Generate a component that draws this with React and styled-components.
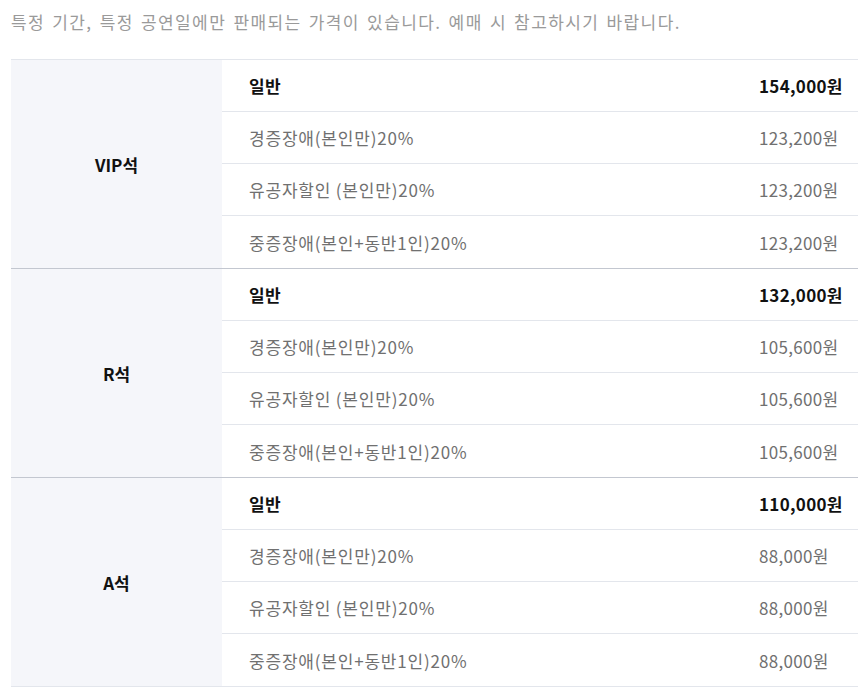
import styled, { createGlobalStyle } from 'styled-components';

const GlobalStyle = createGlobalStyle`
  body {
    margin: 0;
    background: #fff;
    font-family: "Noto Sans CJK KR", "Noto Sans", sans-serif;
  }
`;

const Page = styled.div`
  padding: 9px 9px 0 11px;
`;

const Notice = styled.p`
  margin: 0 0 25px;
  font-size: 17px;
  line-height: 25px;
  color: #9a9a9a;
  letter-spacing: 1.4px;
  word-spacing: 2px;
`;

const Table = styled.div`
  border-top: 1px solid #e3e6ec;
`;

const Group = styled.div`
  display: grid;
  grid-template-columns: 211px 1fr;
  border-bottom: 1px solid ${({ last }) => (last ? '#e3e6ec' : '#c3c7d0')};
`;

const Seat = styled.div`
  display: flex;
  align-items: center;
  justify-content: center;
  background: #f5f6fa;
  font-size: 17px;
  font-weight: 700;
  color: #111;
`;

const Row = styled.div`
  display: flex;
  align-items: center;
  height: 52px;
  box-sizing: border-box;
  padding-left: 27px;
  border-bottom: ${({ end }) => (end ? 'none' : '1px solid #e3e6ec')};
  font-size: 17px;
  letter-spacing: ${({ strong }) => (strong ? '0.3px' : '0.8px')};
  color: ${({ strong }) => (strong ? '#111' : '#707070')};
  font-weight: ${({ strong }) => (strong ? 700 : 400)};
`;

const Label = styled.span`
  flex: 1;
`;

const Price = styled.span`
  width: 99px;
  letter-spacing: 0.3px;
`;

const groups = [
  { seat: 'VIP석', prices: ['154,000원', '123,200원', '123,200원', '123,200원'] },
  { seat: 'R석', prices: ['132,000원', '105,600원', '105,600원', '105,600원'] },
  { seat: 'A석', prices: ['110,000원', '88,000원', '88,000원', '88,000원'] },
];

const labels = ['일반', '경증장애(본인만)20%', '유공자할인 (본인만)20%', '중증장애(본인+동반1인)20%'];

export default function App() {
  return (
    <>
      <GlobalStyle />
      <Page>
        <Notice>특정 기간, 특정 공연일에만 판매되는 가격이 있습니다. 예매 시 참고하시기 바랍니다.</Notice>
        <Table>
          {groups.map((g, gi) => (
            <Group key={g.seat} last={gi === groups.length - 1}>
              <Seat>{g.seat}</Seat>
              <div>
                {labels.map((label, i) => (
                  <Row key={label} strong={i === 0} end={i === labels.length - 1}>
                    <Label>{label}</Label>
                    <Price>{g.prices[i]}</Price>
                  </Row>
                ))}
              </div>
            </Group>
          ))}
        </Table>
      </Page>
    </>
  );
}
